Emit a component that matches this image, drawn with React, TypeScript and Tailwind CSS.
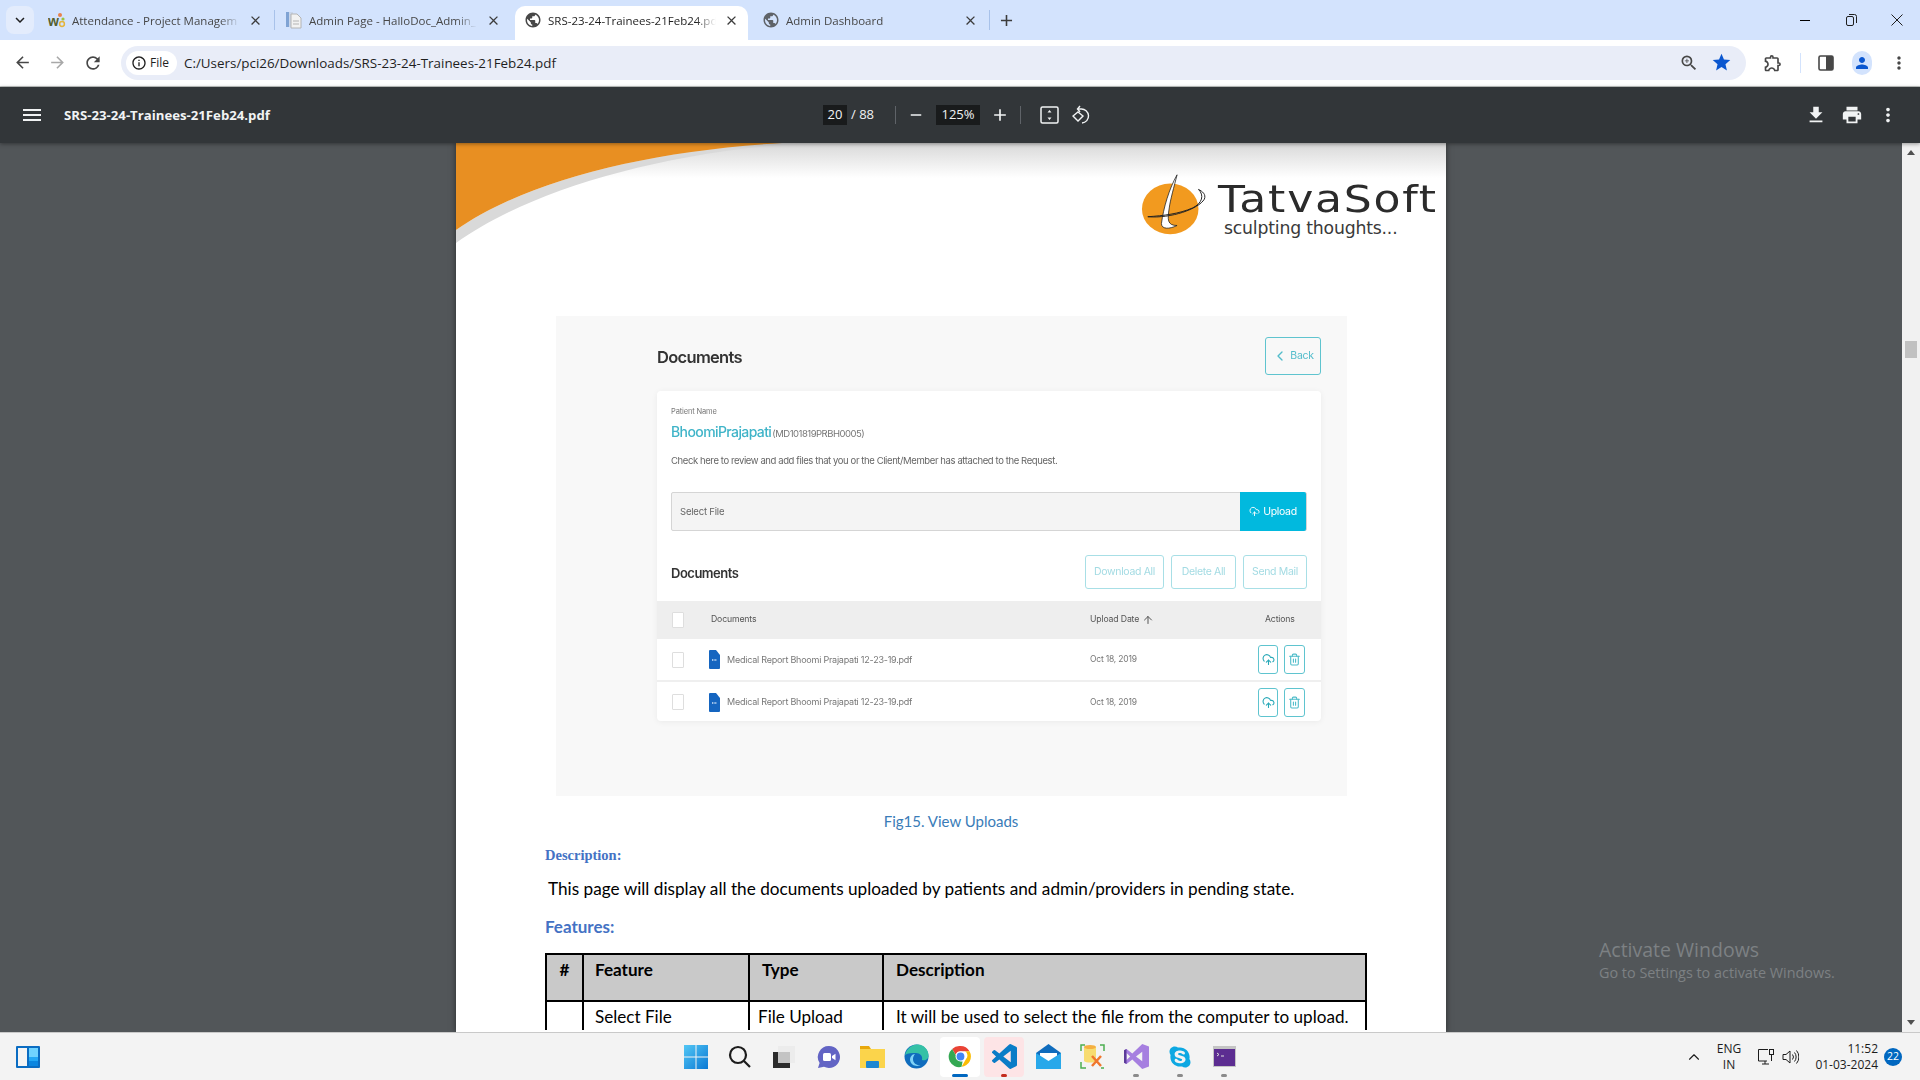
import type React from "react";
import { FaSkype } from "react-icons/fa";
import {
  MdAdd,
  MdClose,
  MdFileDownload,
  MdKeyboardArrowDown,
  MdMenu,
  MdMoreVert,
  MdOutlineExtension,
  MdPerson,
  MdPrint,
  MdPublic,
  MdRefresh,
  MdRemove,
  MdArrowBack,
  MdArrowForward,
  MdInfoOutline,
  MdStar,
  MdZoomIn,
} from "react-icons/md";
import { ArrowUp, ChevronLeft, ChevronUp, CloudUpload, Trash2 } from "lucide-react";

const Favicon = () => (
  <svg width="18" height="18" viewBox="0 0 18 18" className="shrink-0">
    <text x="0" y="15" fontSize="14" fontWeight="700" fill="#55602f" fontFamily="Liberation Sans">w</text>
    <circle cx="12" cy="4" r="2" fill="#e8824a" />
    <circle cx="15" cy="8" r="1.6" fill="#9ac33f" />
    <circle cx="14" cy="13" r="2.4" fill="none" stroke="#e4b43c" strokeWidth="1.5" />
  </svg>
);

const DocFavicon = () => (
  <svg width="17" height="18" viewBox="0 0 17 18" className="shrink-0">
    <rect x="1" y="1" width="7" height="15" fill="#c9d6ea" />
    <rect x="1" y="1" width="3" height="15" fill="#7fa3d4" />
    <path d="M6 3h6l4 4v10H6z" fill="#f2f2f2" stroke="#b4b4b4" />
    <path d="M8 10h6M8 13h6" stroke="#b4b4b4" />
  </svg>
);

const Tab = ({
  icon,
  title,
  className,
  active,
}: {
  icon: React.ReactNode;
  title: string;
  className: string;
  active?: boolean;
}) => (
  <div className={`flex items-center h-[34px] shrink-0 self-end pb-[6px] ${className}`}>
    <span className="w-[24px] shrink-0 flex">{icon}</span>
    <span
      className={`w-[168px] text-[11.5px] translate-y-[1px] whitespace-nowrap overflow-hidden [mask-image:linear-gradient(to_right,black_88%,transparent)] ${
        active ? "text-[#1f1f1f]" : "text-[#474747]"
      }`}
    >
      {title}
    </span>
    <MdClose size={15} className="ml-auto text-[#3c3c3c] shrink-0" />
  </div>
);

const TabStrip = () => (
  <div className="h-[40px] bg-[#d3e3fd] flex items-center shrink-0">
    <div className="ml-[6px] w-[28px] h-[28px] rounded-[8px] bg-[#e3ecfc] flex items-center justify-center shrink-0">
      <MdKeyboardArrowDown size={18} className="text-[#1f1f1f]" />
    </div>
    <Tab className="ml-[14px] w-[216px] pr-[1px]" icon={<Favicon />} title="Attendance - Project Managem" />
    <div className="w-[1px] h-[20px] bg-[#a8c2ea] ml-[10px] mb-[1px] shrink-0" />
    <Tab className="ml-[10px] w-[216px]" icon={<DocFavicon />} title="Admin Page - HalloDoc_Admin_" />
    <Tab
      active
      className="ml-[14px] w-[233px] pl-[9px] pr-[9px] bg-white rounded-t-[10px]"
      icon={<MdPublic size={18} className="text-[#474747]" />}
      title="SRS-23-24-Trainees-21Feb24.pd"
    />
    <Tab
      className="ml-[14px] w-[216px]"
      icon={<MdPublic size={18} className="text-[#5f6368]" />}
      title="Admin Dashboard"
    />
    <div className="w-[1px] h-[20px] bg-[#a8c2ea] ml-[11px] shrink-0" />
    <MdAdd size={19} className="ml-[7px] text-[#3c3c3c] shrink-0" />
    <div className="ml-auto flex items-center">
      <div className="w-[46px] flex justify-center">
        <div className="w-[10px] h-[1px] bg-black" />
      </div>
      <div className="w-[46px] flex justify-center">
        <svg width="11" height="12" viewBox="0 0 11 12" fill="none" stroke="#1f1f1f">
          <rect x="0.5" y="2.5" width="7" height="9" rx="1.5" />
          <path d="M3 .5h5.5a2 2 0 0 1 2 2V9" />
        </svg>
      </div>
      <div className="w-[46px] flex justify-center">
        <svg width="12" height="12" viewBox="0 0 12 12" stroke="#1f1f1f">
          <path d="M.5.5l11 11M11.5.5l-11 11" />
        </svg>
      </div>
    </div>
  </div>
);

const Toolbar = () => (
  <div className="h-[47px] bg-white border-b border-[#c4c7c5] rounded-t-[6px] flex items-center shrink-0 pb-[1px]">
    <div className="flex items-center pl-[13px] gap-[16px] text-[#474747]">
      <MdArrowBack size={19} />
      <MdArrowForward size={19} className="text-[#a8a8a8]" />
      <MdRefresh size={20} />
    </div>
    <div className="ml-[18px] w-[1625px] h-[34px] bg-[#e9edf8] rounded-full flex items-center pl-[5px] pr-[14px] shrink-0">
      <div className="h-[24px] w-[51px] bg-white rounded-full flex items-center pl-[5px] gap-[3px] shrink-0">
        <MdInfoOutline size={16} className="text-[#1f1f1f]" />
        <span className="text-[12px] text-[#1f1f1f]">File</span>
      </div>
      <span className="ml-[7px] pt-[1px] text-[13.4px] text-[#1f1f1f]">C:/Users/pci26/Downloads/SRS-23-24-Trainees-21Feb24.pdf</span>
      <MdZoomIn size={20} className="ml-auto text-[#474747]" />
      <MdStar size={21} className="ml-[12px] text-[#0b57d0]" />
    </div>
    <MdOutlineExtension size={20} className="ml-[17px] text-[#474747] shrink-0" />
    <div className="ml-[17px] w-[1px] h-[20px] bg-[#d3e3fd] shrink-0" />
    <svg width="16" height="16" viewBox="0 0 16 16" className="ml-[17px] shrink-0">
      <rect x="1" y="1" width="14" height="14" rx="1.5" fill="none" stroke="#474747" strokeWidth="1.6" />
      <rect x="8" y="1" width="7" height="14" fill="#474747" />
    </svg>
    <div className="ml-[18px] w-[20px] h-[24px] rounded-full bg-[#d3e3fd] flex items-center justify-center shrink-0">
      <MdPerson size={18} className="text-[#0b57d0]" />
    </div>
    <MdMoreVert size={20} className="ml-[17px] text-[#474747] shrink-0" />
  </div>
);

const FitIcon = () => (
  <svg width="19" height="18" viewBox="0 0 19 18" fill="none">
    <rect x="1" y="1" width="17" height="16" rx="1.5" stroke="#f1f3f4" strokeWidth="1.5" />
    <path d="M9.500 4l2 2.500h-4zM9.500 14l2-2.500h-4z" fill="#f1f3f4" />
  </svg>
);

const RotateIcon = () => (
  <svg width="18" height="20" viewBox="0 0 18 20" fill="none" stroke="#f1f3f4" strokeWidth="1.4">
    <path d="M6 4h3a7 7 0 0 1 1 14" />
    <path d="M8 1L5.500 4 8 7" />
    <path d="M6 7l5 4-5 5-5-5z" />
  </svg>
);

const PdfBar = () => (
  <div className="h-[56px] bg-[#323639] flex items-center shrink-0 text-[#f1f3f4] shadow-[0_1px_4px_rgba(0,0,0,0.4)] relative z-10">
    <MdMenu size={24} className="ml-[20px] shrink-0" />
    <span className="ml-[20px] w-[759px] pt-[2px] text-[13.2px] font-bold">SRS-23-24-Trainees-21Feb24.pdf</span>
    <div className="w-[24px] h-[20px] bg-[#191b1c] flex items-center justify-center text-[13px]">20</div>
    <span className="ml-[4px] w-[44px] text-[13px]">/ 88</span>
    <div className="w-[1px] h-[18px] bg-[#5f6368]" />
    <MdRemove size={18} className="ml-[11px] shrink-0" />
    <div className="ml-[11px] w-[44px] h-[20px] bg-[#191b1c] flex items-center justify-center text-[13px]">125%</div>
    <MdAdd size={20} className="ml-[10px] shrink-0" />
    <div className="ml-[10px] w-[1px] h-[18px] bg-[#5f6368]" />
    <div className="ml-[19px] flex">
      <FitIcon />
    </div>
    <div className="ml-[13px] flex">
      <RotateIcon />
    </div>
    <div className="ml-auto flex items-center gap-[14px] pr-[21px]">
      <MdFileDownload size={22} />
      <MdPrint size={22} />
      <MdMoreVert size={22} />
    </div>
  </div>
);

const TatvaLogo = () => (
  <div className="flex items-start pt-[39px] pr-[10px] shrink-0">
    <svg width="78" height="64" viewBox="0 0 80 64" className="shrink-0 mt-[-8px]">
      <ellipse cx="31" cy="35" rx="29" ry="26" fill="#f29a1f" />
      <path d="M38 0C30 14 24 34 22 50c0 6 8 6 16 2-10 0-10-6-8-18 1-8 5-22 8-34z" fill="#fff" stroke="#222" strokeWidth="0.8" />
      <path d="M8 43c24 2 52-8 58-18 2-5-2-8-6-10 6 6 4 14-6 19-14 6-30 8-46 9z" fill="none" stroke="#222" strokeWidth="1" />
    </svg>
    <div className="w-[218px] flex flex-col font-['DejaVu_Sans',sans-serif]">
      <span className="text-[38px] leading-[40px] tracking-[1.5px] text-[#2b2b2b] mt-[-3px] origin-left scale-x-[1.16] whitespace-nowrap">
        TatvaSoft
      </span>
      <span className="text-[17.3px] leading-[20px] text-[#3a3a3a] ml-[6px] mt-[-1px] tracking-[-0.2px] whitespace-nowrap">
        sculpting thoughts...
      </span>
    </div>
  </div>
);

const PageHeader = () => (
  <div className="h-[173px] flex justify-between bg-[linear-gradient(#d8d8d8,#ffffff_35px)]">
    <svg width="345" height="102" viewBox="0 0 345 102" className="shrink-0">
      <path d="M0 87C70 38 190 8 326 0h16C190 12 70 50 0 100z" fill="#d9d9d9" />
      <path d="M0 0h326C190 8 70 38 0 87z" fill="#e88f22" />
    </svg>
    <TatvaLogo />
  </div>
);

const Checkbox = () => <div className="w-[12px] h-[16px] bg-white border border-[#dedede] rounded-[1px] shrink-0" />;

const DocRow = ({ bordered }: { bordered?: boolean }) => (
  <div className={`flex items-center pl-[15px] pr-[16px] ${bordered ? "h-[43px] border-b-2 border-[#efefef]" : "h-[40px]"}`}>
    <Checkbox />
    <svg width="11" height="19" viewBox="0 0 11 19" className="ml-[25px] shrink-0">
      <path d="M1 0h6l4 5v13a1 1 0 0 1-1 1H1a1 1 0 0 1-1-1V1a1 1 0 0 1 1-1z" fill="#1565c0" />
      <path d="M3 10h5" stroke="#cfe2f7" strokeWidth="1.5" strokeDasharray="1 .6" />
    </svg>
    <span className="ml-[7px] w-[363px] text-[9px] text-[#777] tracking-[-0.23px] whitespace-nowrap">
      Medical Report Bhoomi Prajapati 12-23-19.pdf
    </span>
    <span className="text-[8.5px] text-[#777] tracking-[-0.2px] w-[168px] whitespace-nowrap">Oct 18, 2019</span>
    <div className="w-[20px] h-[29px] rounded-[3px] border-[1.5px] border-[#5fc4cf] flex items-center justify-center shrink-0">
      <CloudUpload size={13} strokeWidth={2} className="text-[#29a9b8]" />
    </div>
    <div className="ml-[6px] w-[21px] h-[29px] rounded-[3px] border-[1.5px] border-[#5fc4cf] flex items-center justify-center shrink-0">
      <Trash2 size={13} strokeWidth={2} className="text-[#4dbcc9]" />
    </div>
  </div>
);

const GhostButton = ({ label, className }: { label: string; className: string }) => (
  <div
    className={`h-[34px] border border-[#a8dfe6] rounded-[3px] flex items-center justify-center text-[10.5px] tracking-[-0.35px] text-[#a3dbe3] ${className}`}
  >
    {label}
  </div>
);

const DocumentsShot = () => (
  <div className="ml-[100px] w-[791px] h-[480px] bg-[#f8f8f8] pt-[21px] pl-[101px] pr-[26px] font-['Inter',sans-serif] blur-[0.3px]">
    <div className="h-[54px] flex items-start justify-between">
      <h2 className="text-[16.5px] font-semibold text-[#333] leading-[40px] tracking-[-0.7px]">Documents</h2>
      <div className="w-[56px] h-[38px] border-[1.5px] border-[#5fc4cf] rounded-[3px] flex items-center justify-center gap-[2px] text-[#52bccb]">
        <ChevronLeft size={16} />
        <span className="text-[10.5px] tracking-[-0.3px]">Back</span>
      </div>
    </div>
    <div className="bg-white rounded-[4px] shadow-[0_1px_6px_rgba(0,0,0,0.06)] h-[330px]">
      <div className="px-[14px] pt-[15px]">
        <div className="text-[7.5px] leading-[12px] text-[#777] tracking-[-0.15px]">Patient Name</div>
        <div className="flex items-baseline mt-[4px] leading-[20px]">
          <span className="text-[14px] font-medium text-[#3fb4c8] tracking-[-0.6px]">BhoomiPrajapati</span>
          <span className="ml-[1px] text-[9.5px] text-[#777] tracking-[-0.5px]">(MD101819PRBH0005)</span>
        </div>
        <div className="mt-[10px] text-[9.5px] leading-[14px] text-[#666] tracking-[-0.4px] whitespace-nowrap">
          Check here to review and add files that you or the Client/Member has attached to the Request.
        </div>
        <div className="mt-[24px] h-[39px] flex bg-[#f4f4f4] border border-[#d5d5d5] rounded-[2px]">
          <span className="pl-[8px] text-[9.5px] leading-[37px] text-[#666] tracking-[-0.2px] flex-1">Select File</span>
          <div className="w-[66px] -my-[1px] bg-[#01b9de] rounded-r-[2px] flex items-center justify-center gap-[3px] text-white">
            <CloudUpload size={11} />
            <span className="text-[10.5px] tracking-[-0.3px]">Upload</span>
          </div>
        </div>
        <div className="mt-[24px] flex items-center">
          <span className="pt-[3px] text-[13px] font-semibold text-[#333] tracking-[-0.5px] flex-1">Documents</span>
          <GhostButton label="Download All" className="w-[79px]" />
          <GhostButton label="Delete All" className="ml-[7px] w-[65px]" />
          <GhostButton label="Send Mail" className="ml-[7px] w-[64px]" />
        </div>
      </div>
      <div className="mt-[12px] h-[38px] bg-[#eeeeee] flex items-center pl-[15px] pr-[16px] text-[8.7px] text-[#555] tracking-[-0.15px]">
        <Checkbox />
        <span className="ml-[27px] w-[379px]">Documents</span>
        <span className="w-[175px] flex items-center gap-[3px]">
          Upload Date <ArrowUp size={12} />
        </span>
        <span>Actions</span>
      </div>
      <DocRow bordered />
      <DocRow />
    </div>
  </div>
);

const thClass = "border-2 border-black align-top font-bold pt-[2px]";
const tdClass = "border-x-2 border-black align-top pt-[2px]";

const FeatureTable = () => (
  <table className="ml-[89px] mt-[14px] w-[822px] table-fixed border-collapse font-['Lato',sans-serif] text-[17.1px] text-black">
    <thead>
      <tr className="h-[47px] bg-[#c9c9c9]">
        <th className={`${thClass} w-[37px] text-center`}>#</th>
        <th className={`${thClass} w-[166px] pl-[11px] text-left`}>Feature</th>
        <th className={`${thClass} w-[134px] pl-[12px] text-left`}>Type</th>
        <th className={`${thClass} pl-[12px] text-left`}>Description</th>
      </tr>
    </thead>
    <tbody>
      <tr>
        <td className={tdClass} />
        <td className={`${tdClass} pl-[11px]`}>Select File</td>
        <td className={`${tdClass} pl-[8px]`}>File Upload</td>
        <td className={`${tdClass} pl-[12px] whitespace-nowrap`}>It will be used to select the file from the computer to upload.</td>
      </tr>
    </tbody>
  </table>
);

const PdfPage = () => (
  <div className="w-[990px] h-[889px] bg-white shrink-0 overflow-hidden shadow-[0_0_6px_rgba(0,0,0,0.5)]">
    <PageHeader />
    <DocumentsShot />
    <p className="mt-[15px] text-center text-[15px] leading-[20px] text-[#3a7cb8] font-['Lato',sans-serif]">
      Fig15. View Uploads
    </p>
    <p className="mt-[16px] ml-[89px] text-[14.5px] leading-[16px] font-bold text-[#4472c4] font-['Liberation_Serif',serif]">
      Description:
    </p>
    <p className="mt-[14px] ml-[92px] text-[17.2px] leading-[24px] text-black font-['Lato',sans-serif]">
      This page will display all the documents uploaded by patients and admin/providers in pending state.
    </p>
    <p className="mt-[14px] ml-[89px] text-[17px] leading-[24px] font-bold text-[#4472c4] font-['Lato',sans-serif]">Features:</p>
    <FeatureTable />
  </div>
);

const Scrollbar = () => (
  <div className="w-[18px] bg-[#f1f1f1] flex flex-col items-center shrink-0">
    <svg width="10" height="6" viewBox="0 0 10 6" className="mt-[7px] shrink-0">
      <path d="M5 0l4 5H1z" fill="#505050" />
    </svg>
    <div className="mt-[185px] w-[12px] h-[17px] bg-[#c1c1c1] shrink-0" />
    <svg width="10" height="6" viewBox="0 0 10 6" className="mt-auto mb-[7px] shrink-0">
      <path d="M5 6l4-5H1z" fill="#505050" />
    </svg>
  </div>
);

const Main = () => (
  <div className="h-[889px] flex bg-[#525659] relative shrink-0 overflow-hidden">
    <div className="flex-1 flex justify-center">
      <PdfPage />
    </div>
    <Scrollbar />
    <div className="absolute left-[1599px] top-[795px] text-[#7d8184]">
      <div className="text-[19.5px] leading-[24px]">Activate Windows</div>
      <div className="text-[14.4px] leading-[21px]">Go to Settings to activate Windows.</div>
    </div>
  </div>
);

const TaskIcon = ({
  children,
  tile,
  mark,
}: {
  children: React.ReactNode;
  tile?: string;
  mark?: string;
}) => (
  <div className="w-[44px] h-[40px] flex items-center justify-center relative">
    {tile && <div className={`absolute inset-x-[2px] inset-y-0 rounded-[4px] ${tile}`} />}
    <div className="relative flex">{children}</div>
    {mark && <div className={`absolute bottom-[0px] left-1/2 -translate-x-1/2 h-[3px] rounded-full ${mark}`} />}
  </div>
);

const TaskbarIcons = () => (
  <div className="flex items-center">
    <TaskIcon>
      <svg width="24" height="24" viewBox="0 0 24 24">
        <defs>
          <linearGradient id="win" x1="0" y1="0" x2="1" y2="1">
            <stop offset="0" stopColor="#52c7f5" />
            <stop offset="1" stopColor="#0a78d4" />
          </linearGradient>
        </defs>
        <path d="M0 0h11.500v11.500H0zM12.500 0H24v11.500H12.500zM0 12.500h11.500V24H0zM12.500 12.500H24V24H12.500z" fill="url(#win)" />
      </svg>
    </TaskIcon>
    <TaskIcon>
      <svg width="24" height="24" viewBox="0 0 24 24" fill="none" stroke="#1c1c1c" strokeWidth="2.2">
        <circle cx="10" cy="10" r="8" />
        <path d="M16 16l6 6" />
      </svg>
    </TaskIcon>
    <TaskIcon>
      <svg width="24" height="24" viewBox="0 0 24 24">
        <rect x="6" y="1" width="17" height="17" fill="#ececec" />
        <rect x="1" y="7" width="17" height="16" fill="#2b2b2b" />
        <rect x="6" y="7" width="12" height="11" fill="#c4c4c4" />
      </svg>
    </TaskIcon>
    <TaskIcon>
      <svg width="24" height="24" viewBox="0 0 24 24">
        <path d="M13 1a11 11 0 1 1-5 20.800L2 23l1.600-5A11 11 0 0 1 13 1z" fill="#6264c4" />
        <rect x="7" y="8" width="8" height="8" rx="1.5" fill="#fff" />
        <path d="M16 11l3.500-2.200v6.400L16 13z" fill="#fff" />
      </svg>
    </TaskIcon>
    <TaskIcon>
      <svg width="25" height="25" viewBox="0 0 25 25">
        <path d="M0 2h9l2 3h14v19H0z" fill="#e8a80c" />
        <rect y="5" width="25" height="19" fill="#fbd44b" />
        <rect x="6" y="17" width="13" height="7" rx="1" fill="#1c86d1" />
      </svg>
    </TaskIcon>
    <TaskIcon>
      <svg width="25" height="25" viewBox="0 0 25 25">
        <circle cx="12.500" cy="12.500" r="12" fill="#0f6cbd" />
        <path d="M1 11C3 3 10 0 14 .5c6 .5 10.500 5 10.500 11 0 4-3.500 5.500-6.500 4.500 1-4-2-7-6-7C8 9 4 9 1 11z" fill="#35c1a6" />
        <path d="M9 15c0 5 5 7 8 6-4 2-10 1-11-5 0-3 2-6 5-6-1 1-2 3-2 5z" fill="#7fd3f7" />
      </svg>
    </TaskIcon>
    <TaskIcon tile="bg-white" mark="w-[16px] bg-[#0067c0]">
      <svg width="25" height="25" viewBox="0 0 48 48">
        <path d="M24 4a20 20 0 0 1 17.300 10H24a10 10 0 0 0-9.400 6.600L8 9.500A20 20 0 0 1 24 4z" fill="#ea4335" />
        <path d="M41.300 14A20 20 0 0 1 26 43.900l8.600-14.900A10 10 0 0 0 33 14z" fill="#fbbc04" />
        <path d="M26 43.900A20 20 0 0 1 8 9.500l8.600 14.900A10 10 0 0 0 28 33.500z" fill="#34a853" />
        <circle cx="24" cy="24" r="9.500" fill="#fff" />
        <circle cx="24" cy="24" r="7.500" fill="#4285f4" />
      </svg>
    </TaskIcon>
    <TaskIcon tile="bg-[#fde4e6]" mark="w-[6px] bg-[#c42b1c]">
      <svg width="25" height="25" viewBox="0 0 24 24">
        <path
          d="M23.150 2.587L18.210.21a1.494 1.494 0 0 0-1.705.29l-9.460 8.630-4.120-3.128a.999.999 0 0 0-1.276.057L.327 7.261A1 1 0 0 0 .326 8.740L3.899 12 .326 15.260a1 1 0 0 0 .001 1.479L1.650 17.940a.999.999 0 0 0 1.276.057l4.120-3.128 9.460 8.630a1.492 1.492 0 0 0 1.704.29l4.942-2.377A1.500 1.500 0 0 0 24 20.060V3.939a1.500 1.500 0 0 0-.850-1.352zm-5.146 14.861L10.826 12l7.178-5.448v10.896z"
          fill="#0a7cc7"
        />
      </svg>
    </TaskIcon>
    <TaskIcon>
      <svg width="25" height="25" viewBox="0 0 25 25">
        <path d="M0 9L12.500 0 25 9v16H0z" fill="#0f6cbd" />
        <path d="M4 9h17v6l-8.500 5L4 15z" fill="#fff" />
        <path d="M0 9l12.500 8L25 9v16H0z" fill="#28a8ea" />
      </svg>
    </TaskIcon>
    <TaskIcon>
      <svg width="25" height="25" viewBox="0 0 25 25" fill="none">
        <path d="M1 7V1h4M20 1h4v6M1 18v6h5M24 24h-3" stroke="#4caf50" strokeWidth="1.5" />
        <path d="M4 3h12v14c-2 2-10 2-12 0z" fill="#f7dc6f" />
        <ellipse cx="10" cy="3" rx="6" ry="2" fill="#f5b041" />
        <path d="M12 12l9 10M21 12l-9 10" stroke="#f0762c" strokeWidth="2.500" />
      </svg>
    </TaskIcon>
    <TaskIcon mark="w-[6px] bg-[#8a8a8a]">
      <svg width="25" height="25" viewBox="0 0 24 24">
        <path d="M17.500 0L8 9.200 2.400 4.800 0 6v12l2.400 1.200L8 14.800 17.500 24l6.500-2.500V2.500z" fill="#a67fe0" />
        <path d="M2.400 15.300V8.700L6 12zM17.500 16.500L11.500 12l6-4.500z" fill="#f3f3f3" />
        <path d="M0 6l2.400-1.200V19.200L0 18z" fill="#5c3b99" />
      </svg>
    </TaskIcon>
    <TaskIcon mark="w-[6px] bg-[#8a8a8a]">
      <FaSkype size={24} className="text-[#0da8e2]" />
    </TaskIcon>
    <TaskIcon mark="w-[6px] bg-[#8a8a8a]">
      <svg width="23" height="21" viewBox="0 0 23 21">
        <rect width="23" height="21" fill="#c4c4c4" />
        <rect x="1" y="3" width="21" height="17" fill="#5c2d91" />
        <path d="M4 7l2 1.500L4 10M8 10h3" stroke="#ddd" fill="none" />
      </svg>
    </TaskIcon>
  </div>
);

const Taskbar = () => (
  <div className="h-[48px] bg-[#f3f3f3] border-t border-[#c9c9c9] grid grid-cols-[1fr_auto_1fr] items-center shrink-0">
    <div className="pl-[16px] flex">
      <svg width="24" height="22" viewBox="0 0 24 22">
        <rect width="24" height="22" rx="1" fill="#0a6cc2" />
        <rect x="2" y="2" width="9" height="18" fill="#f4f4f4" />
        <rect x="13" y="2" width="9" height="9" fill="#6fd3ff" />
        <rect x="13" y="11" width="9" height="4" fill="#23a8f5" />
        <rect x="13" y="15" width="9" height="5" fill="#0b86e0" />
      </svg>
    </div>
    <TaskbarIcons />
    <div className="flex items-center justify-end pr-[18px] text-[#1c1c1c]">
      <ChevronUp size={18} strokeWidth={1.5} />
      <div className="ml-[8px] w-[36px] text-center text-[12px] leading-[16px]">
        <div>ENG</div>
        <div>IN</div>
      </div>
      <svg width="17" height="18" viewBox="0 0 17 18" fill="none" stroke="#1c1c1c" className="ml-[10px]">
        <path d="M10 13H1.500V1.500H11M5 16h7M8 13v3" />
        <rect x="12.500" y="1.500" width="4" height="5" />
        <path d="M14.500 7v6" />
      </svg>
      <svg width="17" height="16" viewBox="0 0 17 16" fill="none" stroke="#1c1c1c" className="ml-[8px]">
        <path d="M1 5.500h3L8 2v12l-4-3.500H1z" />
        <path d="M10.500 5.500a4 4 0 0 1 0 5M12.500 3.500a7 7 0 0 1 0 9M14.500 1.500a10 10 0 0 1 0 13" />
      </svg>
      <div className="ml-[9px] w-[70px] text-right text-[12px] leading-[16px]">
        <div>11:52</div>
        <div>01-03-2024</div>
      </div>
      <div className="ml-[6px] w-[18px] h-[18px] rounded-full bg-[#0067c0] text-white text-[10.5px] flex items-center justify-center">22</div>
    </div>
  </div>
);

export default function App() {
  return (
    <div className="w-[1920px] h-[1080px] flex flex-col overflow-hidden font-['Open_Sans',sans-serif]">
      <TabStrip />
      <Toolbar />
      <PdfBar />
      <Main />
      <Taskbar />
    </div>
  );
}
